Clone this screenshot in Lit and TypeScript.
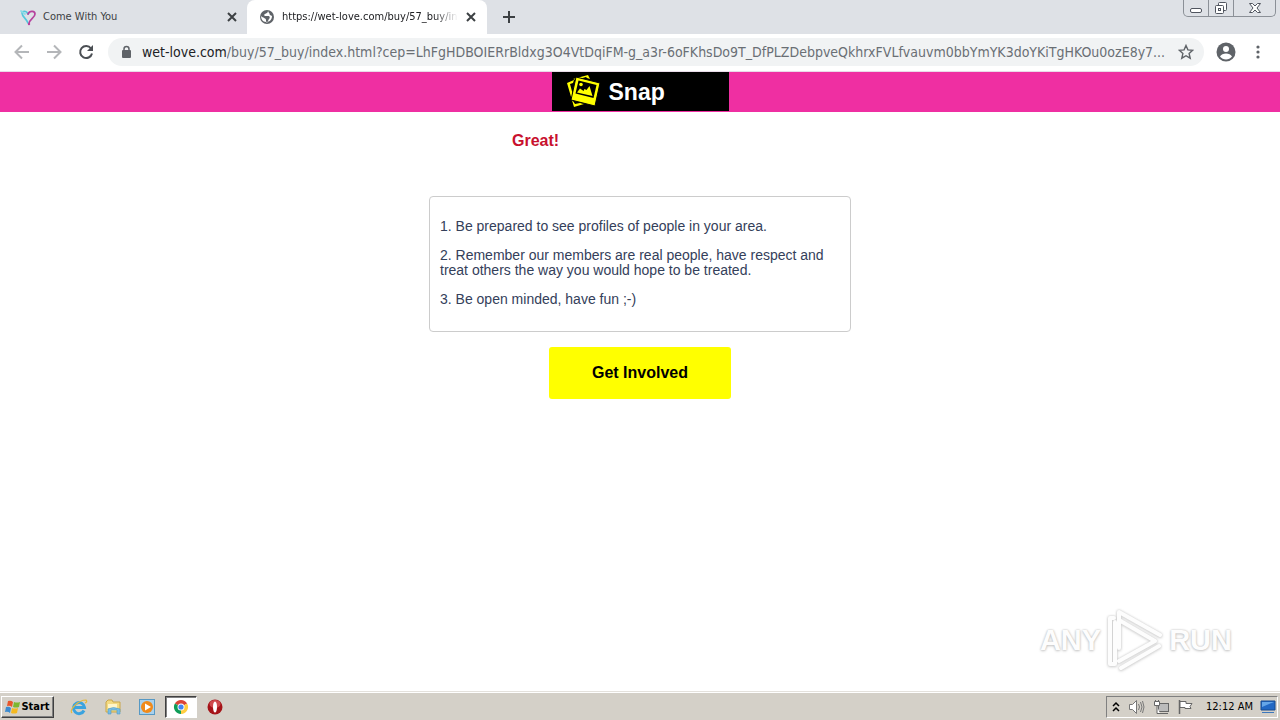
import { LitElement, html, css, svg } from "lit";
import { customElement } from "lit/decorators.js";

const closeIcon = svg`<path d="M1 1l8 8M9 1l-8 8" stroke="#3c4043" stroke-width="2" fill="none"/>`;

@customElement("browser-tabs")
export class BrowserTabs extends LitElement {
  static styles = css`
    :host { display: block; background: #dee1e6; font: 11px/16px "DejaVu Sans Condensed", "DejaVu Sans", sans-serif; color: #3c4043; }
    .strip { display: flex; height: 34px; align-items: stretch; }
    .tab { display: flex; align-items: center; width: 240px; padding: 0 12px 0 12px; box-sizing: border-box; }
    .first { width: 247px; padding: 0 10px 0 20px; }
    .active { background: #fff; border-radius: 8px 8px 0 0; color: #202124; padding-right: 11px; }
    .tab svg { display: block; flex: none; }
    .title { flex: 1; min-width: 0; margin: 0 4px 0 7px; white-space: nowrap; }
    .fade { -webkit-mask-image: linear-gradient(90deg, #000 152px, transparent 176px); mask-image: linear-gradient(90deg, #000 152px, transparent 176px); }
    button { border: 0; background: none; padding: 0; margin: 0; display: flex; align-items: center; justify-content: center; }
    .new { width: 28px; margin-left: 8px; }
    .controls { margin: 0 4px 0 auto; display: flex; height: 17px; box-sizing: border-box; border: 1px solid #8b9097; border-top: 0; border-radius: 0 0 5px 5px; }
    .controls button { width: 25px; border-right: 1px solid #8b9097; }
    .controls .last { width: 41px; border-right: 0; }
  `;
  render() {
    return html`<div class="strip">
      <div class="tab first">
        <svg width="16" height="17" viewBox="0 0 16 17" fill="none" stroke-linecap="round" stroke-width="1.700">
          <path d="M8 14C7 10 2 8 2 4c0-2 4-3 6 1" stroke="#54c8dc"/><path d="M1 2l4 3" stroke="#8bdce7"/>
          <path d="M8 5c2-4 7-3 7 0 0 4-6 5-6 10" stroke="#b6429d"/><circle cx="9" cy="15" r="1.200" fill="#b6429d" stroke="none"/>
        </svg>
        <span class="title">Come With You</span>
        <button aria-label="Close tab"><svg width="10" height="10">${closeIcon}</svg></button>
      </div>
      <div class="tab active">
        <svg width="16" height="16" viewBox="0 0 16 16"><circle cx="8" cy="8" r="7" fill="#5f6368"/>
          <path d="M9 2c0 2-2 2-3 3-1 0-1 2 0 2h4c1 1 1 2 0 3s-1 3-2 4c-1-1-1-2-1-3 0-2-3-2-5-4 0 3 2 6 5 6 4 0 6-3 6-6l-2-1c-1-1 0-2-1-2L9 2z" fill="#fff"/></svg>
        <span class="title fade">https://wet-love.com/buy/57_buy/in</span>
        <button aria-label="Close tab"><svg width="10" height="10">${closeIcon}</svg></button>
      </div>
      <button class="new" aria-label="New tab"><svg width="12" height="12"><path d="M6 0v12M0 6h12" stroke="#3c4043" stroke-width="2"/></svg></button>
      <div class="controls">
        <button aria-label="Minimize"><svg width="14" height="16"><rect x="1.5" y="8.500" width="11" height="4" rx="1.500" fill="#fff" stroke="#50555f"/></svg></button>
        <button aria-label="Restore"><svg width="14" height="16" fill="#fff" stroke="#50555f"><rect x="4.500" y="2.500" width="8" height="8" rx="1"/><rect x="1.500" y="5.500" width="8" height="8" rx="1"/><rect x="4.500" y="8.500" width="2" height="2"/></svg></button>
        <button class="last" aria-label="Close"><svg width="14" height="16"><path d="M1.500 3.500h3L7 6l2.500-2.500h3L9 8l3.500 4.500h-3L7 10l-2.500 2.500h-3L5 8z" fill="#fff" stroke="#50555f"/></svg></button>
      </div>
    </div>`;
  }
}

@customElement("browser-toolbar")
export class BrowserToolbar extends LitElement {
  static styles = css`
    :host { display: block; background: #fff; border-bottom: 1px solid #e9dbe9; }
    .bar { display: flex; align-items: center; height: 36px; padding: 0 12px 1px 12px; }
    button { border: 0; background: none; padding: 0; width: 20px; height: 20px; display: flex; align-items: center; justify-content: center; flex: none; }
    .nav { display: flex; gap: 12px; }
    .address { display: flex; align-items: center; flex: 1; min-width: 0; height: 28px; margin-left: 12px; padding: 0 8px 0 12px; border-radius: 14px; background: #f1f3f4; font: 14px/20px "DejaVu Sans Condensed", "DejaVu Sans", sans-serif; color: #202124; }
    .lock { flex: none; margin-right: 10px; }
    input { flex: 1; min-width: 0; border: 0; padding: 0; margin: 0 8px 0 0; background: none; font: inherit; color: #6a6f74; outline: 0; text-overflow: ellipsis; }
    .profile, .menu { margin-left: 12px; }
  `;
  render() {
    return html`<div class="bar">
      <div class="nav">
        <button aria-label="Back"><svg width="16" height="16" fill="none" stroke="#b4b6b9" stroke-width="2"><path d="M15 8H2M8 1.500L1.500 8 8 14.500"/></svg></button>
        <button aria-label="Forward"><svg width="16" height="16" fill="none" stroke="#b4b6b9" stroke-width="2"><path d="M1 8h13M8 1.500L14.500 8 8 14.500"/></svg></button>
        <button aria-label="Reload"><svg width="16" height="16"><path d="M13 4.500A6 6 0 1 0 14 9.500" fill="none" stroke="#4b4f54" stroke-width="2"/><path d="M15 1v6H9z" fill="#4b4f54"/></svg></button>
      </div>
      <label class="address">
        <svg class="lock" width="12" height="14"><rect x="2" y="5" width="9" height="8" rx="1" fill="#5f6368"/><path d="M4 6V4a2.500 2.500 0 0 1 5 0v2" fill="none" stroke="#5f6368" stroke-width="1.500"/></svg>
        <span>wet-love.com</span><input aria-label="Address" value="/buy/57_buy/index.html?cep=LhFgHDBOIERrBldxg3O4VtDqiFM-g_a3r-6oFKhsDo9T_DfPLZDebpveQkhrxFVLfvauvm0bbYmYK3doYKiTgHKOu0ozE8y7..." />
        <button aria-label="Bookmark this page"><svg width="16" height="16" viewBox="0 0 16 16"><path d="M8 1.500l1.900 4.400 4.800.4-3.600 3.200 1.100 4.700L8 11.700l-4.200 2.500 1.100-4.700L1.300 6.300l4.800-.4z" fill="none" stroke="#5f6368" stroke-width="1.400"/></svg></button>
      </label>
      <button class="profile" aria-label="Profile"><svg width="20" height="20"><circle cx="10" cy="10" r="9.500" fill="#5f6368"/><circle cx="10" cy="7" r="3" fill="#fff"/><path d="M4 14.500c2-4 10-4 12 0-3 4-9 4-12 0z" fill="#fff"/></svg></button>
      <button class="menu" aria-label="Menu"><svg width="4" height="16" fill="#5f6368"><circle cx="2" cy="3" r="1.600"/><circle cx="2" cy="8" r="1.600"/><circle cx="2" cy="13" r="1.600"/></svg></button>
    </div>`;
  }
}

@customElement("landing-page")
export class LandingPage extends LitElement {
  static styles = css`
    :host { display: block; background: #fff; font-family: "Liberation Sans", Arial, sans-serif; }
    header { display: flex; justify-content: center; align-items: flex-start; background: #ef2fa2; height: 40px; }
    .logo { display: flex; align-items: center; gap: 8px; width: 177px; height: 39px; box-sizing: border-box; padding-left: 14px; background: #000; color: #fff; font-size: 23px; line-height: 28px; font-weight: bold; text-decoration: none; }
    h1 { margin: 20px 0 0 40%; font-size: 16px; line-height: 18px; color: #c8102e; }
    main { display: flex; flex-direction: column; align-items: center; margin-top: 46px; }
    .rules { width: 400px; max-width: 90%; padding: 8px 10px 10px; border: 1px solid #ccc; border-radius: 4px; color: #34405a; font-size: 14px; line-height: 15px; }
    p { margin: 14px 0; }
    button { margin-top: 15px; padding: 17px 43px; border: 0; border-radius: 3px; background: #ff0; color: #000; font: bold 16px/18px "Liberation Sans", Arial, sans-serif; }
  `;
  render() {
    return html`<header><a class="logo" href="#">
        <svg width="35" height="33" viewBox="0 0 35 33">
          <path d="M1 8l7-3-1 3-3 1 3 11 0 6 2 3 5-1 4 1-10 3z" fill="#ff0"/>
          <path d="M7 4L22 0l2 4-3-1-1-1-10 3z" fill="#ff0"/>
          <path d="M10 2l24 6-5 23-24-6z" fill="#ff0" stroke="#000" stroke-width="1"/>
          <path d="M12.500 5.500l18 4.500-3 13-18-4.500z" fill="#000"/>
          <path d="M11 17.500l3-4 3.500 2.500 1-2 2 1 3-4 3 10z" fill="#ff0"/><circle cx="15" cy="9.500" r="1.800" fill="#ff0"/>
        </svg>
        <span>Snap</span></a></header>
      <h1>Great!</h1>
      <main>
        <section class="rules">
          <p>1. Be prepared to see profiles of people in your area.</p>
          <p>2. Remember our members are real people, have respect and treat others the way you would hope to be treated.</p>
          <p>3. Be open minded, have fun ;-)</p>
        </section>
        <button>Get Involved</button>
      </main>`;
  }
}

@customElement("task-bar")
export class TaskBar extends LitElement {
  static styles = css`
    :host { display: block; background: #d4d0c8; border-top: 1px solid #e4e1dc; font: 11px/14px "DejaVu Sans Condensed", "DejaVu Sans", sans-serif; color: #000; }
    .bar { display: flex; align-items: center; height: 25px; padding: 1px 2px 1px 1px; border-top: 1px solid #fff; }
    button { display: flex; align-items: center; justify-content: center; padding: 0; border: 0; background: none; color: #000; font: inherit; }
    .start { width: 53px; height: 22px; box-sizing: border-box; border: 1px solid; border-color: #fff #404040 #404040 #fff; box-shadow: inset -1px -1px #808080; font-weight: bold; }
    .apps { display: flex; margin-left: 9px; gap: 2px; }
    .apps button { width: 32px; height: 22px; box-sizing: border-box; border: 1px solid transparent; }
    .apps .on { background: #fff; border-color: #404040 #fff #fff #404040; box-shadow: inset 1px 1px #808080; }
    .tray { display: flex; align-items: center; margin-left: auto; height: 22px; box-sizing: border-box; border: 1px solid; border-color: #808080 #fff #fff #808080; padding: 0 1px 0 5px; }
    .tray svg { margin-right: 8px; }
    .tray .screen { margin: 0 0 0 7px; }
    time { margin-left: 5px; white-space: nowrap; }
  `;
  render() {
    return html`<div class="bar">
      <button class="start"><svg width="16" height="16"><path d="M3 2q3-1 5 1L7 8Q5 6 2 7z" fill="#e8562a"/><path d="M9 3q3 1 6 0l-1 5q-3 1-6 0z" fill="#7db72f"/><path d="M1 8q3-1 5 1l-1 5q-2-2-5-1z" fill="#3c8bd0"/><path d="M7 9q3 1 6 0l-1 5q-3 1-6 0z" fill="#f5b920"/></svg><span>Start</span></button>
      <div class="apps">
        <button aria-label="Internet Explorer"><svg width="18" height="18" fill="none"><path d="M14 12.500A5.500 5.500 0 1 1 14.500 9.500H5" stroke="#3aa3df" stroke-width="3"/><path d="M2 15C-1 12 8 2 16 2c2 2-1 3-1 3" stroke="#e6b93c" stroke-width="1.200"/></svg></button>
        <button aria-label="Explorer"><svg width="18" height="18"><path d="M2 4l2-2h4l1 2h7v10H2z" fill="#f3da82" stroke="#c9a64b"/><path d="M4 6h9v4H4z" fill="#fff5c9"/><path d="M4 16v-5q5-3 12 0v5h-3v-4H7v4z" fill="#78bde4" stroke="#4f9cc8" stroke-width=".6"/></svg></button>
        <button aria-label="Media Player"><svg width="18" height="18"><rect x="1.500" y="1.500" width="15" height="15" fill="#a9d1ed" stroke="#5799c4"/><circle cx="9" cy="9" r="6" fill="#f08a1b"/><path d="M7 5.500l6 3.500-6 3.500z" fill="#fff"/></svg></button>
        <button class="on" aria-label="Chrome"><svg width="16" height="16" viewBox="0 0 16 16"><path d="M8 8L1.900 4.500A7 7 0 0 1 14.100 4.500z" fill="#db4437"/><path d="M8 8l6.100-3.500A7 7 0 0 1 8 15z" fill="#ffcd40"/><path d="M8 8v7A7 7 0 0 1 1.900 4.500z" fill="#0f9d58"/><circle cx="8" cy="8" r="3.500" fill="#fff"/><circle cx="8" cy="8" r="2.600" fill="#4285f4"/></svg></button>
        <button aria-label="Opera"><svg width="18" height="18"><circle cx="9" cy="9" r="7.500" fill="#a51318"/><ellipse cx="9" cy="6" rx="5.500" ry="4" fill="#cf4a4e"/><ellipse cx="9" cy="9" rx="2" ry="5.500" fill="#fff"/></svg></button>
      </div>
      <div class="tray">
        <svg width="8" height="12" fill="none" stroke="#000" stroke-width="1.500"><path d="M1 5l3-3 3 3M1 10l3-3 3 3"/></svg>
        <svg width="17" height="16" fill="none" stroke="#777"><path d="M1.500 5.500h3l4-4v13l-4-4h-3z" fill="#fff"/><path d="M10.500 5q2 3 0 6M12.500 3q3 5 0 10M14.500 2q3 6 0 12"/></svg>
        <svg width="16" height="16" fill="#fff" stroke="#666"><rect x="5.500" y="4.500" width="10" height="8" fill="#bbb"/><path d="M7 14.500h8M1.500 2.500h5v4h-5zM2.500 1v2M5.500 1v2M4 7v7.500h3"/></svg>
        <svg width="16" height="16" fill="#fff" stroke="#666"><path d="M2.500 1v14" stroke-width="1.500"/><path d="M3 2.500h6v2h6l-2 3 1 2H8v-1H3z"/></svg>
        <time>12:12 AM</time>
        <svg class="screen" width="16" height="16"><path d="M1 2h14v9H1z" fill="#2268c4" stroke="#174a8f"/><path d="M2 3h12L2 8z" fill="#65a6e8"/><path d="M2 13h12v1H2z" fill="#3c78bd"/></svg>
      </div>
    </div>`;
  }
}

@customElement("app-root")
export class AppRoot extends LitElement {
  static styles = css`
    :host { display: flex; flex-direction: column; min-height: 100vh; background: #fff; position: relative; }
    landing-page { flex: 1; }
    .mark { position: absolute; right: 48px; bottom: 48px; display: flex; align-items: center; gap: 5px; color: #fdfdfd; font: bold 29px/60px "Liberation Sans", Arial, sans-serif; text-shadow: 0 0 2px #bbb, 0 1px 3px #ccc; }
    .mark svg { filter: drop-shadow(0 0 1px #ccc) drop-shadow(0 1px 1px #ddd); }
  `;
  render() {
    return html`<browser-tabs></browser-tabs>
      <browser-toolbar></browser-toolbar>
      <landing-page></landing-page>
      <task-bar></task-bar>
      <div class="mark"><span>ANY</span>
        <svg width="58" height="64" viewBox="0 0 58 64" fill="none" stroke="#fdfdfd" stroke-width="4" stroke-linejoin="round" stroke-linecap="round"><path d="M13 40V4l41 23M13 12l36 21-36 20M8 10H4v46h5V14"/><path d="M15 60l38-22"/></svg>
        <span>RUN</span></div>`;
  }
}
